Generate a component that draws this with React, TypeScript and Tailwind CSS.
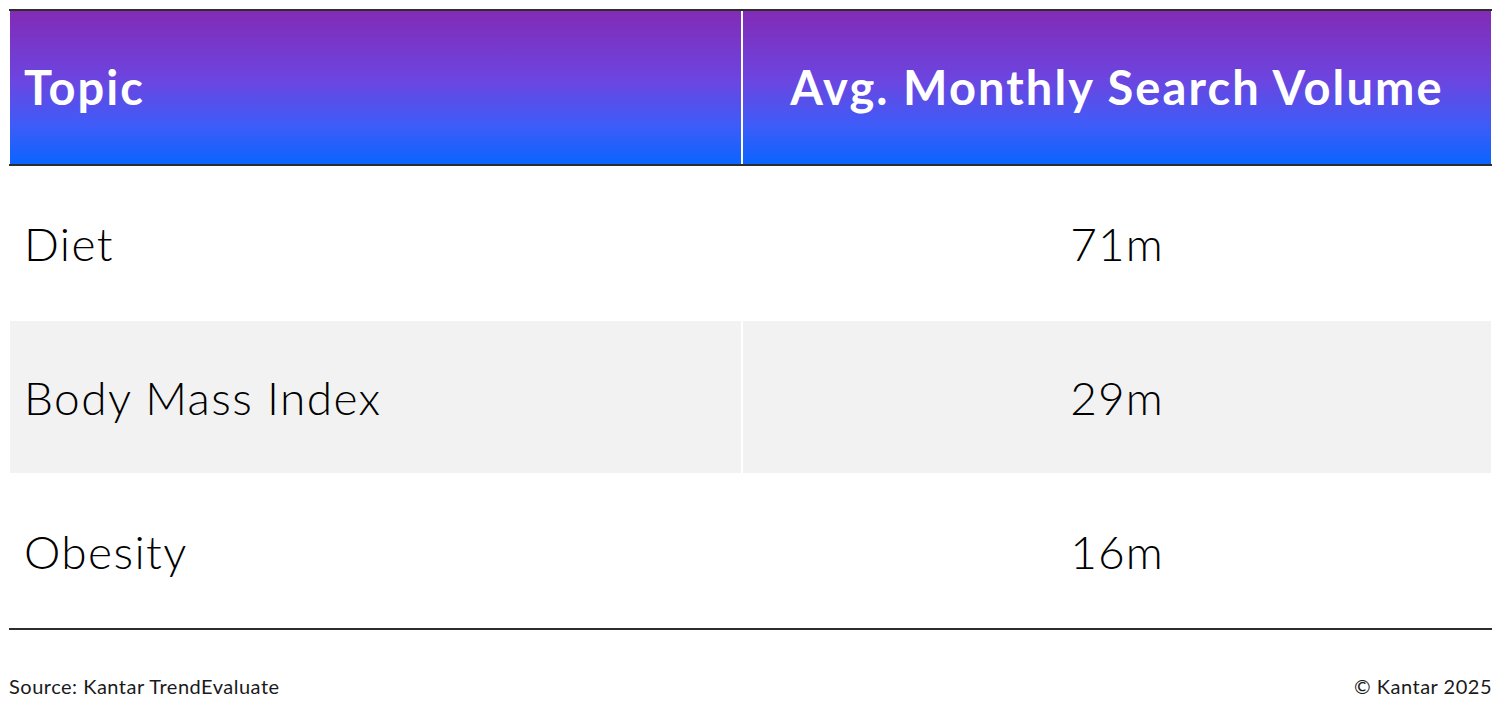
import React from "react";

const rows = [
    { topic: "Diet", volume: "71m" },
    { topic: "Body Mass Index", volume: "29m" },
    { topic: "Obesity", volume: "16m" },
];

const App: React.FC = () => {
    return (
        <div className="w-[1500px] h-[710px] bg-white font-['Lato','Noto_Sans',sans-serif] text-black">
            <div className="pt-[9px] pl-[9px] w-[1492px]">
                {/* Table */}
                <div className="border-t-2 border-[#2d2d2d]">
                    {/* Header */}
                    <div className="flex h-[153px] bg-[linear-gradient(to_bottom,#822bb6,#6c45e0_45%,#3d5cf8_75%,#0b64ff)] border-l border-r border-white">
                        <div className="w-[731px] flex items-center pl-[14px] text-white font-bold text-[47px] tracking-[2px]">
                            Topic
                        </div>
                        <div className="w-[2px] bg-white" />
                        <div className="flex-1 flex items-center justify-center text-white font-bold text-[47px] tracking-[2.1px]">
                            Avg. Monthly Search Volume
                        </div>
                    </div>
                    <div className="h-[2px] bg-[#2d2d2d]" />

                    {/* Body rows */}
                    {rows.map((row, i) => (
                        <div
                            key={row.topic}
                            className={`flex h-[154px] border-l border-r border-white ${i === 1 ? "border-t border-b" : ""}`}
                        >
                            <div className={`w-[731px] flex items-center pl-[14px] text-[46px] font-light tracking-[1.4px] ${i === 1 ? "bg-[#f2f2f2]" : ""}`}>
                                {row.topic}
                            </div>
                            <div className="w-[2px] bg-white" />
                            <div className={`flex-1 flex items-center justify-center text-[46px] font-light tracking-[1px] ${i === 1 ? "bg-[#f2f2f2]" : ""}`}>
                                {row.volume}
                            </div>
                        </div>
                    ))}
                    <div className="h-[2px] bg-[#2d2d2d]" />
                </div>

                {/* Footer */}
                <div className="flex justify-between items-center mt-[41px] text-[20px] tracking-[0.5px] text-[#1a1a1a]">
                    <span>Source: Kantar TrendEvaluate</span>
                    <span>© Kantar 2025</span>
                </div>
            </div>
        </div>
    );
};

export default App;
